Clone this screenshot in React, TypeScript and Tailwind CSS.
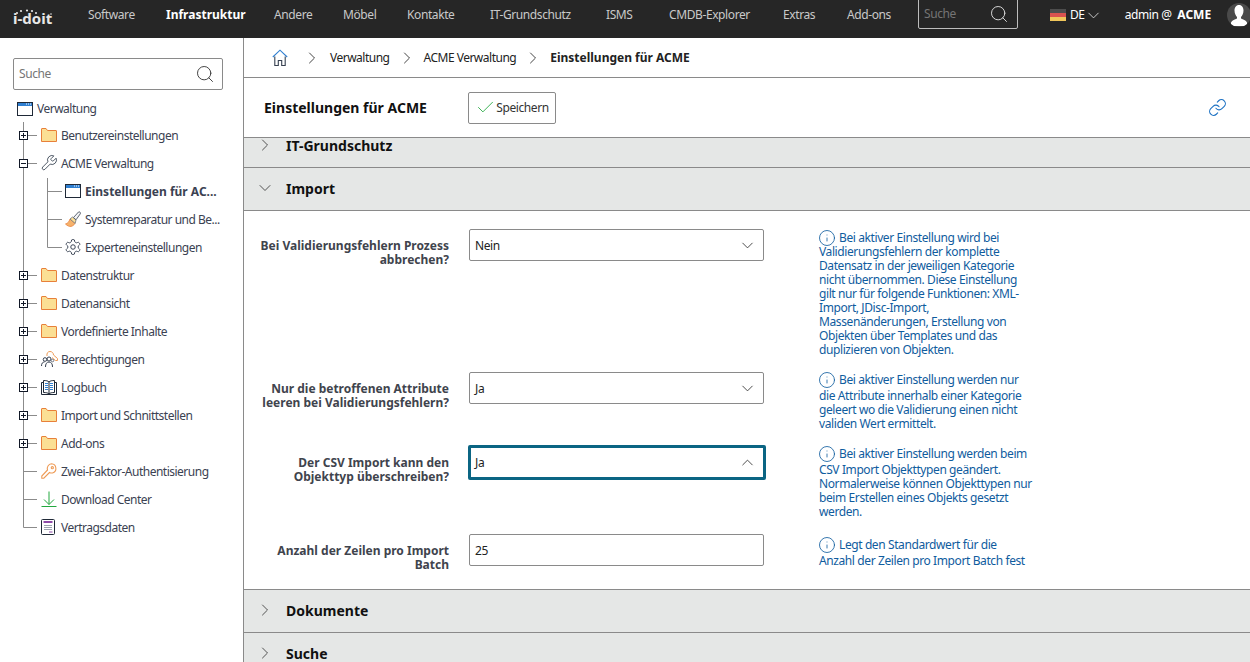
import { Check, ChevronDown, ChevronRight, ChevronUp, Info, Link, Search } from 'lucide-react';
import type { ReactNode } from 'react';

const navItems = [
  { label: 'Software', width: 'w-[78px]' },
  { label: 'Infrastruktur', width: 'w-[108px]', active: true },
  { label: 'Andere', width: 'w-[69px]' },
  { label: 'Möbel', width: 'w-[64px]' },
  { label: 'Kontakte', width: 'w-[83px]' },
  { label: 'IT-Grundschutz', width: 'w-[116px]' },
  { label: 'ISMS', width: 'w-[63px]' },
  { label: 'CMDB-Explorer', width: 'w-[114px]' },
  { label: 'Extras', width: 'w-[64px]' },
  { label: 'Add-ons', width: 'w-[71px]' },
];

function FolderIcon() {
  return (
    <svg width="16" height="14" viewBox="0 0 16 14" className="shrink-0">
      <path d="M.5 13.5V1a.5.5 0 0 1 .5-.5h4l1.500 2H15a.5.5 0 0 1 .5.5v10.500z" fill="#fbdf94" stroke="#e8803a" />
    </svg>
  );
}

function WindowIcon() {
  return (
    <svg width="16" height="14" viewBox="0 0 16 14" className="shrink-0">
      <rect x=".5" y=".5" width="15" height="13" fill="#fff" stroke="#1f2937" />
      <rect x="1" y="1" width="14" height="3" fill="#2f7fd1" />
      <path d="M9 2h1M11 2h1M13 2h1" stroke="#fff" strokeWidth="1" />
    </svg>
  );
}

function WrenchIcon() {
  return (
    <svg width="18" height="18" viewBox="0 0 24 24" fill="none" stroke="#4b5563" strokeWidth="1.300" className="-ml-px shrink-0">
      <path d="M14.7 6.3a1 1 0 0 0 0 1.4l1.6 1.6a1 1 0 0 0 1.4 0l3.77-3.77a6 6 0 0 1-7.94 7.94l-6.91 6.91a2.12 2.12 0 0 1-3-3l6.91-6.91a6 6 0 0 1 7.94-7.94z" />
    </svg>
  );
}

function BrushIcon() {
  return (
    <svg width="17" height="17" viewBox="0 0 17 17" className="shrink-0">
      <path d="M.5 13c2.200-.5 3.500-2 4.500-5l5 4.500c-2 3-5.500 4.500-9.500.5z" fill="#f6b26b" stroke="#e8803a" strokeWidth=".8" />
      <path d="M5 8l2.500-2 3.500 3-.8 3.400z" fill="#fbdf94" stroke="#6b7280" strokeWidth=".8" />
      <path d="M8.500 6.500l5-5.500c1-.8 2.600.8 1.800 1.800l-4.300 6z" fill="#f3f4f6" stroke="#4b5563" strokeWidth=".9" />
    </svg>
  );
}

function GearIcon() {
  return (
    <svg width="18" height="18" viewBox="0 0 24 24" fill="none" stroke="#374151" strokeWidth="1.300" className="-ml-px shrink-0">
      <path d="M12.220 2h-.44a2 2 0 0 0-2 2v.18a2 2 0 0 1-1 1.730l-.43.25a2 2 0 0 1-2 0l-.15-.08a2 2 0 0 0-2.730.73l-.22.38a2 2 0 0 0 .73 2.730l.15.1a2 2 0 0 1 1 1.720v.51a2 2 0 0 1-1 1.740l-.15.09a2 2 0 0 0-.73 2.730l.22.38a2 2 0 0 0 2.730.73l.15-.08a2 2 0 0 1 2 0l.43.25a2 2 0 0 1 1 1.730V20a2 2 0 0 0 2 2h.44a2 2 0 0 0 2-2v-.18a2 2 0 0 1 1-1.730l.43-.25a2 2 0 0 1 2 0l.15.08a2 2 0 0 0 2.730-.73l.22-.39a2 2 0 0 0-.73-2.730l-.15-.08a2 2 0 0 1-1-1.740v-.5a2 2 0 0 1 1-1.740l.15-.09a2 2 0 0 0 .73-2.730l-.22-.38a2 2 0 0 0-2.730-.73l-.15.08a2 2 0 0 1-2 0l-.43-.25a2 2 0 0 1-1-1.730V4a2 2 0 0 0-2-2z" />
      <circle cx="12" cy="12" r="3" />
    </svg>
  );
}

function UsersKeyIcon() {
  return (
    <svg width="17" height="17" viewBox="0 0 17 17" fill="none" className="shrink-0">
      <path d="M6 5c-.5-3 1-4.500 3-4.500s3.500 1.500 3.500 3.500l4 3.500v2h-2L11 6.500" stroke="#ee9b56" />
      <circle cx="8" cy="8" r="2" stroke="#374151" />
      <circle cx="4" cy="8.500" r="1.800" stroke="#374151" />
      <path d="M4.500 16c0-3 1-5 3.500-5s3.500 2 3.500 5M.5 15c0-2.500 1-4 3-4" stroke="#374151" />
      <circle cx="11.500" cy="9.500" r="1.300" stroke="#6b7280" />
    </svg>
  );
}

function BookIcon() {
  return (
    <svg width="16" height="15" viewBox="0 0 16 15" fill="none" className="shrink-0">
      <path d="M.5 2.500h15v12H.5z" stroke="#1f2937" />
      <path d="M2.500 12.500V.5c2.500 0 4.500.3 5.500 1.500 1-1.200 3-1.500 5.500-1.500v12c-2.500 0-4.500.3-5.500 1.500-1-1.200-3-1.500-5.500-1.500zM8 2v12" fill="#fff" stroke="#1f2937" />
      <path d="M4 3.500h3M4 5.500h3M4 7.500h3M4 9.500h3M9 3.500h3M9 5.500h3M9 7.500h3M9 9.500h3" stroke="#2f7fd1" />
    </svg>
  );
}

function KeyIcon() {
  return (
    <svg width="16" height="16" viewBox="0 0 16 16" fill="none" stroke="#ee9b56" strokeWidth="1.100" className="shrink-0">
      <path d="M10.500.800a4.700 4.700 0 0 1 1 9.200 4.700 4.700 0 0 1-3-.5L2.800 15.200H.8v-2.200l5.700-6a4.700 4.700 0 0 1 4-6.200z" />
      <circle cx="11.300" cy="4.700" r="1.100" />
    </svg>
  );
}

function DownloadIcon() {
  return (
    <svg width="16" height="16" viewBox="0 0 16 16" fill="none" stroke="#22a83f" strokeWidth="1" className="shrink-0">
      <path d="M8 .5v13M3 8.500l5 5 5-5M.5 15.500h15" />
    </svg>
  );
}

function ContractIcon() {
  return (
    <svg width="14" height="16" viewBox="0 0 14 16" fill="none" className="shrink-0">
      <rect x=".5" y=".5" width="13" height="15" rx="1" fill="#fff" stroke="#1f2937" />
      <path d="M2.500 3h9" stroke="#8e4aa8" strokeWidth="2" />
      <path d="M3 6.500h8M3 8.500h8M3 10.500h8" stroke="#9ca3af" />
      <path d="M8 13h3.500" stroke="#8e4aa8" />
    </svg>
  );
}

function HomeIcon() {
  return (
    <svg width="16" height="18" viewBox="0 0 16 18" fill="none" className="shrink-0">
      <path d="M.8 8L8 1.200 15.200 8" stroke="#2f7fd1" strokeWidth="1.100" />
      <path d="M2.800 7.500v9h3.500v-5h3.400v5h3.500v-9" stroke="#374151" strokeWidth="1.100" />
    </svg>
  );
}

function Logo() {
  return (
    <div className="relative ml-[13px] w-[75px] pt-[6px] text-[15px] font-bold leading-none tracking-normal text-[#e8e8e8]">
      i-doit
      <svg width="42" height="10" viewBox="0 0 42 10" fill="#e8e8e8" className="absolute left-0 top-[4px]">
        <circle cx="4" cy="4" r="1" />
        <circle cx="8" cy="2" r="1.100" />
        <circle cx="14" cy="1.500" r="1.100" />
        <circle cx="19" cy="2" r="1.100" />
        <circle cx="23" cy="4" r="1" />
        <circle cx="38" cy="5" r="1" fill="#999" />
      </svg>
    </div>
  );
}

// one row of tree connector, drawn per row so the lines stay in flow
function Connector({ level, kind, last, lastChild }: { level: number; kind?: 'plus' | 'minus'; last?: boolean; lastChild?: boolean }) {
  const width = level === 0 ? 40 : 64;
  return (
    <svg width={width} height="28" viewBox={`0 0 ${width} 28`} className="shrink-0" fill="none">
      <path d={last ? 'M23.500 0v13.500' : 'M23.500 0v28'} stroke="#8b8b8b" />
      {level === 0 && <path d="M23.500 13.500H37" stroke="#8b8b8b" />}
      {level === 1 && <path d={`M47.500 0v${lastChild ? 13.5 : 28}M47.500 13.500H62`} stroke="#8b8b8b" />}
      {kind && (
        <g>
          <rect x="19.500" y="9.500" width="8" height="8" fill="#fff" stroke="#111827" />
          <path d="M21 13.500h5" stroke="#111827" />
          {kind === 'plus' && <path d="M23.500 11v5" stroke="#111827" />}
        </g>
      )}
    </svg>
  );
}

function TreeRow({ level = 0, kind, last, lastChild, icon, children, bold }: {
  level?: number;
  kind?: 'plus' | 'minus';
  last?: boolean;
  lastChild?: boolean;
  icon: ReactNode;
  children: ReactNode;
  bold?: boolean;
}) {
  return (
    <div className="flex h-7 items-center">
      <Connector level={level} kind={kind} last={last} lastChild={lastChild} />
      <div className="ml-px flex items-center">
        <div className="flex w-5 -translate-y-px items-center">{icon}</div>
        <span className={`whitespace-nowrap text-[12px] text-[#3b4252] ${bold ? 'font-bold tracking-normal' : 'tracking-[-0.5px]'}`}>{children}</span>
      </div>
    </div>
  );
}

function Sidebar() {
  return (
    <aside className="w-[244px] shrink-0 border-r border-[#8a8a8a] pl-[13px] pt-5">
      <div className="flex h-8 w-[210px] items-center justify-between rounded-[2px] border border-[#8a8a8a] pl-[5px] pr-[7px]">
        <span className="text-[12px] text-[#757575]">Suche</span>
        <Search size={20} strokeWidth={1.1} className="text-[#333]" />
      </div>
      <div className="-ml-[13px] mt-1">
        <div className="flex h-7 items-center pl-[17px] pt-px">
          <div className="flex w-5 items-center"><WindowIcon /></div>
          <span className="text-[12px] tracking-[-0.5px] text-[#3b4252]">Verwaltung</span>
        </div>
        <TreeRow kind="plus" icon={<FolderIcon />}>Benutzereinstellungen</TreeRow>
        <TreeRow kind="minus" icon={<WrenchIcon />}>ACME Verwaltung</TreeRow>
        <TreeRow level={1} icon={<WindowIcon />} bold>Einstellungen für AC...</TreeRow>
        <TreeRow level={1} icon={<BrushIcon />}>Systemreparatur und Be...</TreeRow>
        <TreeRow level={1} lastChild icon={<GearIcon />}>Experteneinstellungen</TreeRow>
        <TreeRow kind="plus" icon={<FolderIcon />}>Datenstruktur</TreeRow>
        <TreeRow kind="plus" icon={<FolderIcon />}>Datenansicht</TreeRow>
        <TreeRow kind="plus" icon={<FolderIcon />}>Vordefinierte Inhalte</TreeRow>
        <TreeRow kind="plus" icon={<UsersKeyIcon />}>Berechtigungen</TreeRow>
        <TreeRow kind="plus" icon={<BookIcon />}>Logbuch</TreeRow>
        <TreeRow kind="plus" icon={<FolderIcon />}>Import und Schnittstellen</TreeRow>
        <TreeRow kind="plus" icon={<FolderIcon />}>Add-ons</TreeRow>
        <TreeRow icon={<KeyIcon />}>Zwei-Faktor-Authentisierung</TreeRow>
        <TreeRow icon={<DownloadIcon />}>Download Center</TreeRow>
        <TreeRow last icon={<ContractIcon />}>Vertragsdaten</TreeRow>
      </div>
    </aside>
  );
}

function Field({ label, value, arrow, focused }: { label: ReactNode; value: string; arrow?: 'up' | 'down'; focused?: boolean }) {
  return (
    <>
      <div className="w-[205px] shrink-0 pt-[10px] text-right text-[12px] font-bold leading-[14px] tracking-normal text-[#3f444d]">{label}</div>
      <div
        className={`flex shrink-0 items-center justify-between rounded-[2px] bg-white pr-[6px] text-[12px] text-[#222] ${
          focused
            ? 'z-10 -mt-px -mr-[2px] ml-[19px] h-[35px] w-[298px] border-[3px] border-[#0b6583] pl-[4px]'
            : 'ml-5 h-8 w-[295px] border border-[#8a8a8a] pl-[5px]'
        }`}
      >
        <span className="pt-px">{value}</span>
        {arrow === 'down' && <ChevronDown size={19} strokeWidth={1.1} className="text-[#333]" />}
        {arrow === 'up' && <ChevronUp size={19} strokeWidth={1.1} className="text-[#333]" />}
      </div>
    </>
  );
}

function Help({ lead, leadHeight, children, offset }: { lead: string; leadHeight: string; children: ReactNode; offset: string }) {
  return (
    <div className={`ml-[55px] w-[225px] whitespace-nowrap text-[12px] leading-[14px] text-[#0f5c9e] ${offset}`}>
      <div className={leadHeight}>
        <Info size={18} strokeWidth={1.1} className="-my-1 -ml-[1px] mr-[3px] inline-block -translate-y-px align-middle" />
        {lead}
      </div>
      {children}
    </div>
  );
}

function SectionHeader({ title, open, clipped }: { title: string; open?: boolean; clipped?: boolean }) {
  const chevron = 'text-[#444]';
  return (
    <div className={`flex shrink-0 items-center border-b border-[#8a8a8a] bg-[#e5e7e6] pl-[11px] ${clipped ? 'h-[30px] pb-[15px]' : 'h-[43px] pb-[2px]'}`}>
      {open
        ? <ChevronDown size={20} strokeWidth={1.1} className={chevron} />
        : <ChevronRight size={20} strokeWidth={1.1} className={chevron} />}
      <span className="ml-[11px] text-[14px] font-bold tracking-normal text-[#111]">{title}</span>
    </div>
  );
}

export default function App() {
  return (
    <div className="flex h-[662px] w-[1250px] flex-col overflow-hidden bg-white font-['Noto_Sans',sans-serif] tracking-[-0.4px]">
      <header className="flex h-[38px] shrink-0 items-center bg-[#262626] pb-2 text-[12px] text-[#c9c9c9]">
        <Logo />
        {navItems.map((item) => (
          <span key={item.label} className={`${item.width} whitespace-nowrap ${item.active ? 'font-bold tracking-normal text-white' : ''}`}>
            {item.label}
          </span>
        ))}
        <div className="-mt-[2px] flex h-[30px] w-[100px] items-center justify-between rounded-b-[2px] border border-[#bdbdbd] pl-[5px] pr-[8px]">
          <span className="text-[#757575]">Suche</span>
          <Search size={20} strokeWidth={1.1} className="text-[#e5e5e5]" />
        </div>
        <div className="ml-8 flex h-[12px] w-4 flex-col">
          <div className="flex-1 bg-[#4d4d4d]" />
          <div className="flex-1 bg-[#d9534f]" />
          <div className="flex-1 bg-[#f0c65a]" />
        </div>
        <span className="ml-1 text-white">DE</span>
        <ChevronDown size={19} strokeWidth={1.1} className="-ml-[1px] text-[#ddd]" />
        <span className="ml-[22px] whitespace-nowrap text-white">admin @ <b className="ml-[3px] tracking-normal">ACME</b></span>
        <div className="ml-auto -mt-[1px] flex h-6 w-6 translate-x-px items-center justify-center overflow-hidden rounded-full bg-[#4a4a4a]">
          <svg width="18" height="22" viewBox="0 0 18 22" fill="#fff">
            <path d="M9 1c3 0 4.500 2.500 4.500 5.500S12 12 11 13v1.500c2 1 5 1.500 6 4V22H1v-3.500c1-2.500 4-3 6-4V13C6 12 4.500 9.500 4.500 6.500S6 1 9 1z" />
          </svg>
        </div>
      </header>

      <div className="flex min-h-0 flex-1">
        <Sidebar />
        <main className="flex min-w-0 flex-1 flex-col">
          <div className="flex h-10 shrink-0 items-center border-b border-[#8a8a8a] pl-[28px] text-[12px] tracking-[-0.5px] text-[#222]">
            <HomeIcon />
            <ChevronRight size={20} strokeWidth={1.1} className="ml-[14px] text-[#333]" />
            <span className="ml-[8px]">Verwaltung</span>
            <ChevronRight size={20} strokeWidth={1.1} className="ml-[7px] text-[#333]" />
            <span className="ml-[7px]">ACME Verwaltung</span>
            <ChevronRight size={20} strokeWidth={1.1} className="ml-[7px] text-[#333]" />
            <span className="ml-[7px] font-bold tracking-normal">Einstellungen für ACME</span>
          </div>
          <div className="flex h-[60px] shrink-0 items-center justify-between border-b border-[#8a8a8a] pl-5 pr-[23px]">
            <div className="flex items-center">
              <h1 className="w-[204px] whitespace-nowrap text-[14px] font-bold tracking-normal text-[#111]">Einstellungen für ACME</h1>
              <button className="flex h-8 w-[88px] items-center justify-center rounded-[2px] border border-[#8a8a8a] text-[12px] text-[#333]">
                <Check size={21} strokeWidth={1} className="text-[#22a83f]" />
                Speichern
              </button>
            </div>
            <Link size={19} strokeWidth={1.4} className="text-[#1f73c4]" />
          </div>
          <SectionHeader title="IT-Grundschutz" clipped />
          <SectionHeader title="Import" open />
          <div className="h-[379px] shrink-0 overflow-hidden border-b border-[#8a8a8a] pt-[18px]">
            <div className="flex h-[143px]">
              <Field label={<>Bei Validierungsfehlern Prozess<br />abbrechen?</>} value="Nein" arrow="down" />
              <Help lead="Bei aktiver Einstellung wird bei" leadHeight="h-[14px]" offset="pt-[2px]">
                Validierungsfehlern der komplette<br />Datensatz in der jeweiligen Kategorie<br />nicht übernommen. Diese Einstellung<br />gilt nur für folgende Funktionen: XML-<br />Import, JDisc-Import,<br />Massenänderungen, Erstellung von<br />Objekten über Templates und das<br />duplizieren von Objekten.
              </Help>
            </div>
            <div className="flex h-[74px]">
              <Field label={<>Nur die betroffenen Attribute<br />leeren bei Validierungsfehlern?</>} value="Ja" arrow="down" />
              <Help lead="Bei aktiver Einstellung werden nur" leadHeight="h-[16px]" offset="pt-[1px]">
                die Attribute innerhalb einer Kategorie<br />geleert wo die Validierung einen nicht<br />validen Wert ermittelt.
              </Help>
            </div>
            <div className="flex h-[88px]">
              <Field label={<>Der CSV Import kann den<br />Objekttyp überschreiben?</>} value="Ja" arrow="up" focused />
              <Help lead="Bei aktiver Einstellung werden beim" leadHeight="h-[16px]" offset="pt-[1px]">
                CSV Import Objekttypen geändert.<br />Normalerweise können Objekttypen nur<br />beim Erstellen eines Objekts gesetzt<br />werden.
              </Help>
            </div>
            <div className="flex">
              <Field label={<>Anzahl der Zeilen pro Import<br />Batch</>} value="25" />
              <Help lead="Legt den Standardwert für die" leadHeight="h-[16px]" offset="pt-[4px]">
                Anzahl der Zeilen pro Import Batch fest
              </Help>
            </div>
          </div>
          <SectionHeader title="Dokumente" />
          <SectionHeader title="Suche" />
        </main>
      </div>
    </div>
  );
}
